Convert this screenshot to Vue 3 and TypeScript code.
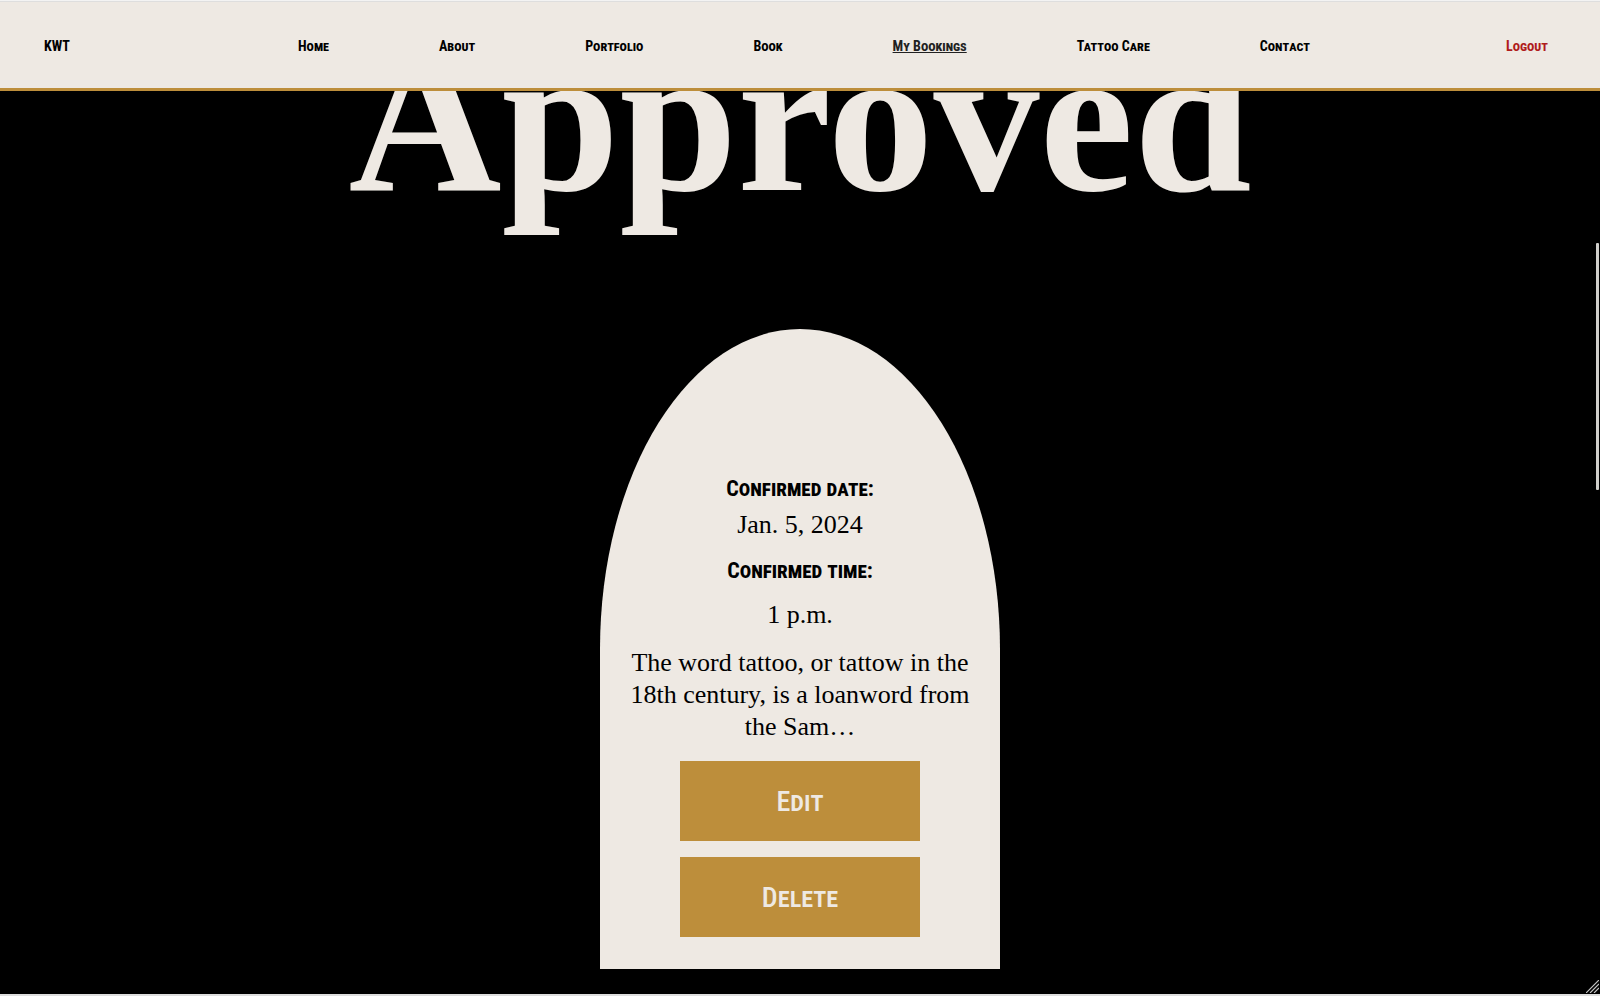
<script setup lang="ts">
interface NavItem {
  label: string
  href: string
  active?: boolean
}

const navItems: NavItem[] = [
  { label: 'Home', href: '#home' },
  { label: 'About', href: '#about' },
  { label: 'Portfolio', href: '#portfolio' },
  { label: 'Book', href: '#book' },
  { label: 'My Bookings', href: '#bookings', active: true },
  { label: 'Tattoo Care', href: '#care' },
  { label: 'Contact', href: '#contact' },
]

const booking = {
  date: 'Jan. 5, 2024',
  time: '1 p.m.',
  description: 'The word tattoo, or tattow in the 18th century, is a loanword from the Sam…',
}
</script>

<template>
  <div class="page">
    <header class="header">
      <a class="link" href="#home">KWT</a>
      <nav class="nav" aria-label="Main">
        <a
          v-for="item in navItems"
          :key="item.label"
          class="link"
          :class="{ active: item.active }"
          :href="item.href"
          :aria-current="item.active ? 'page' : undefined"
        >{{ item.label }}</a>
      </nav>
      <a class="link logout" href="#logout">Logout</a>
    </header>

    <main class="main">
      <h1 class="title">Approved</h1>
      <article class="card">
        <h2 class="label">Confirmed date:</h2>
        <p class="text date">{{ booking.date }}</p>
        <h2 class="label">Confirmed time:</h2>
        <p class="text time">{{ booking.time }}</p>
        <p class="text description">{{ booking.description }}</p>
        <div class="actions">
          <button class="action" type="button">Edit</button>
          <button class="action" type="button">Delete</button>
        </div>
      </article>
    </main>

    <div class="scroll-thumb"></div>
    <svg class="grip" width="13" height="13" viewBox="0 0 13 13" aria-hidden="true">
      <path d="M0 13L13 0M4 13L13 4M8 13L13 8" stroke="#c4c4c4" stroke-width="1.2" />
    </svg>
    <div class="bottom-edge"></div>
  </div>
</template>

<style>
body {
  margin: 0;
  background: #000;
}
</style>

<style scoped>
.page {
  min-height: 100vh;
  box-sizing: border-box;
  background: #000;
  color: #000;
  font-family: "Liberation Serif", serif;
}

.header {
  position: fixed;
  inset: 0 0 auto 0;
  z-index: 1;
  display: grid;
  grid-template-columns: 1fr auto 1fr;
  align-items: center;
  box-sizing: border-box;
  height: 91px;
  padding: 3px 52px 0 44px;
  background: #eee9e3;
  border-top: 1px solid #f3f3f3;
  border-bottom: 3px solid #bd8e3b;
  box-shadow: inset 0 1px 0 #dedede;
}

.nav {
  display: flex;
  gap: 110px;
  padding-left: 16px;
}

.link {
  font-family: "Roboto Condensed", Roboto, "Liberation Sans", sans-serif;
  font-size: 14px;
  font-weight: 700;
  font-variant: small-caps;
  line-height: 24px;
  color: #000;
  text-decoration: none;
  white-space: nowrap;
}

.link.active {
  color: #212121;
  text-decoration: underline;
}

.link.logout {
  justify-self: end;
  color: #b01c1c;
}

.main {
  display: flex;
  flex-direction: column;
  align-items: center;
  gap: 104px;
  padding: 13px 16px 24px;
}

.title {
  margin: 0;
  font-size: 212px;
  font-weight: 700;
  line-height: 212px;
  color: #eee9e3;
}

.card {
  display: flex;
  flex-direction: column;
  align-items: center;
  box-sizing: border-box;
  width: 400px;
  max-width: 100%;
  padding: 140px 28px 32px;
  background: #eee9e3;
  border-radius: 50% 50% 0 0;
  text-align: center;
}

.label {
  margin: 0;
  font-family: "Roboto Condensed", Roboto, "Liberation Sans", sans-serif;
  font-size: 22px;
  font-weight: 700;
  font-variant: small-caps;
  line-height: 40px;
}

.text {
  margin: 0;
  font-size: 26px;
  line-height: 32px;
}

.date {
  margin-bottom: 10px;
}

.time {
  margin: 8px 0 16px;
}

.description {
  margin-bottom: 18px;
}

.actions {
  display: flex;
  flex-direction: column;
  gap: 16px;
  width: 240px;
}

.action {
  height: 80px;
  padding: 0;
  border: 0;
  background: #bd8e3b;
  color: #eee9e3;
  font-family: "Roboto Condensed", Roboto, "Liberation Sans", sans-serif;
  font-size: 28px;
  font-weight: 500;
  font-variant: small-caps;
}

.scroll-thumb {
  position: fixed;
  top: 243px;
  right: 1px;
  width: 3px;
  height: 247px;
  border-radius: 1px;
  background: #d0cfcb;
}

.grip {
  position: fixed;
  right: 1px;
  bottom: 3px;
}

.bottom-edge {
  position: fixed;
  inset: auto 0 0 0;
  height: 2px;
  background: #dedede;
}
</style>
